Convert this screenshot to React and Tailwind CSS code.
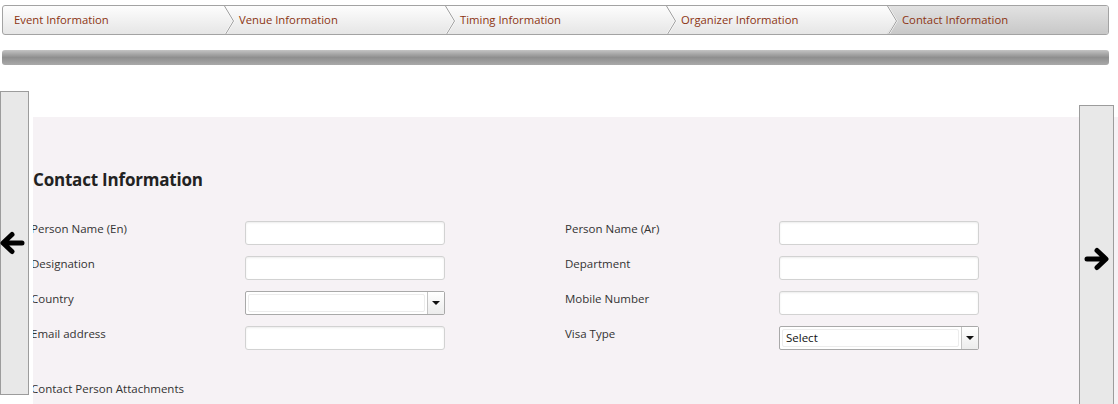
import React from 'react';

const steps = [
  'Event Information',
  'Venue Information',
  'Timing Information',
  'Organizer Information',
  'Contact Information',
];

const ArrowLeft = () => (
  <svg width="26" height="26" viewBox="0 0 26 26" fill="none">
    <path d="M23 13H5M13 4.5L4 13L13 21.5" stroke="#000" strokeWidth="5" strokeLinecap="round" strokeLinejoin="round" />
  </svg>
);

const ArrowRight = () => (
  <svg width="26" height="26" viewBox="0 0 26 26" fill="none">
    <path d="M3 13H21M13 4.5L22 13L13 21.5" stroke="#000" strokeWidth="5" strokeLinecap="round" strokeLinejoin="round" />
  </svg>
);

const Chevron = () => (
  <svg className="absolute left-0 top-0" width="11" height="30" viewBox="0 0 11 30" fill="none">
    <path d="M0.5 0L9.5 15L0.5 30" stroke="#ffffff" strokeWidth="2" />
    <path d="M0.5 0L9.5 15L0.5 30" stroke="#9a9a9a" strokeWidth="1" />
  </svg>
);

const TextBox = () => (
  <div className="h-[24px] w-[200px] rounded-[3px] border border-[#d2d2d2] bg-white shadow-[inset_0_1px_2px_rgba(0,0,0,0.08)]" />
);

const SelectBox = ({ value }) => (
  <div className="flex h-[24px] w-[200px] rounded-[2px] border border-[#a9a9a9] bg-white">
    <div className="m-[2px] flex flex-1 items-center rounded-[2px] border border-[#ececec] pl-[3px] text-[11.5px] text-[#111]">
      {value}
    </div>
    <div className="flex w-[17px] items-center justify-center border-l border-[#c4c4c4] bg-gradient-to-b from-white to-[#ececec]">
      <div className="h-0 w-0 border-x-[4px] border-t-[4px] border-x-transparent border-t-[#111]" />
    </div>
  </div>
);

const Label = ({ children, edge }) => (
  <div className={`text-[11.5px] leading-[16px] text-[#333] ${edge ? '-ml-[2px]' : ''}`}>{children}</div>
);

export default function App() {
  return (
    <div className="h-[404px] w-[1118px] overflow-hidden bg-white font-['Open_Sans',sans-serif]">
      {/* Wizard steps */}
      <div className="mx-[2px] mt-[5px] flex h-[30px] w-[1107px] overflow-hidden rounded-[3px] border border-[#a3a3a3] bg-gradient-to-b from-[#fdfdfd] to-[#e6e6e6]">
        {steps.map((s, i) => {
          const active = i === steps.length - 1;
          return (
            <div key={s} className="relative flex h-full flex-1 items-center">
              {active && (
                <div className="absolute inset-0 bg-gradient-to-b from-[#e2e2e2] to-[#c8c8c8] [clip-path:polygon(0_0,100%_0,100%_100%,0_100%,9px_50%)]" />
              )}
              {i > 0 && <Chevron />}
              <span className={`relative text-[11.3px] text-[#8c3412] ${i === 0 ? 'pl-[11px]' : 'pl-[15px]'}`}>{s}</span>
            </div>
          );
        })}
      </div>

      {/* Progress bar */}
      <div className="mx-[2px] mt-[15px] h-[15px] w-[1107px] rounded-[3px] bg-gradient-to-b from-[#c4c4c4] via-[#8f8f8f] to-[#a9a9a9]" />

      {/* Main */}
      <div className="relative mt-[26px] flex items-start">
        <div className="flex h-[304px] w-[29px] items-center border border-[#9c9c9c] bg-[#e8e8e8]">
          <div className="-ml-[2px]">
            <ArrowLeft />
          </div>
        </div>

        <div className="ml-[4px] flex flex-1 flex-col">
          <div className="h-[26px] bg-white" />
          <div className="h-[300px] overflow-hidden bg-[#f6f2f5] pt-[51px]">
            <h2 className="text-[17px] font-bold leading-[24px] tracking-[-0.2px] text-[#222]">Contact Information</h2>

            <div className="mt-[29px] grid grid-cols-[212px_200px_120px_214px_200px] gap-y-[11px]">
              <Label edge>Person Name (En)</Label>
              <TextBox />
              <div />
              <Label>Person Name (Ar)</Label>
              <TextBox />

              <Label edge>Designation</Label>
              <TextBox />
              <div />
              <Label>Department</Label>
              <TextBox />

              <Label edge>Country</Label>
              <SelectBox value="" />
              <div />
              <Label>Mobile Number</Label>
              <TextBox />

              <Label edge>Email address</Label>
              <TextBox />
              <div />
              <Label>Visa Type</Label>
              <SelectBox value="Select" />
            </div>

            <div className="mt-[31px]">
              <Label edge>Contact Person Attachments</Label>
            </div>
          </div>
        </div>

        {/* Next button */}
        <div className="absolute left-[1079px] top-[14px] flex h-[308px] w-[35px] items-center justify-center border border-[#9c9c9c] bg-[#e8e8e8]">
          <ArrowRight />
        </div>
      </div>
    </div>
  );
}
